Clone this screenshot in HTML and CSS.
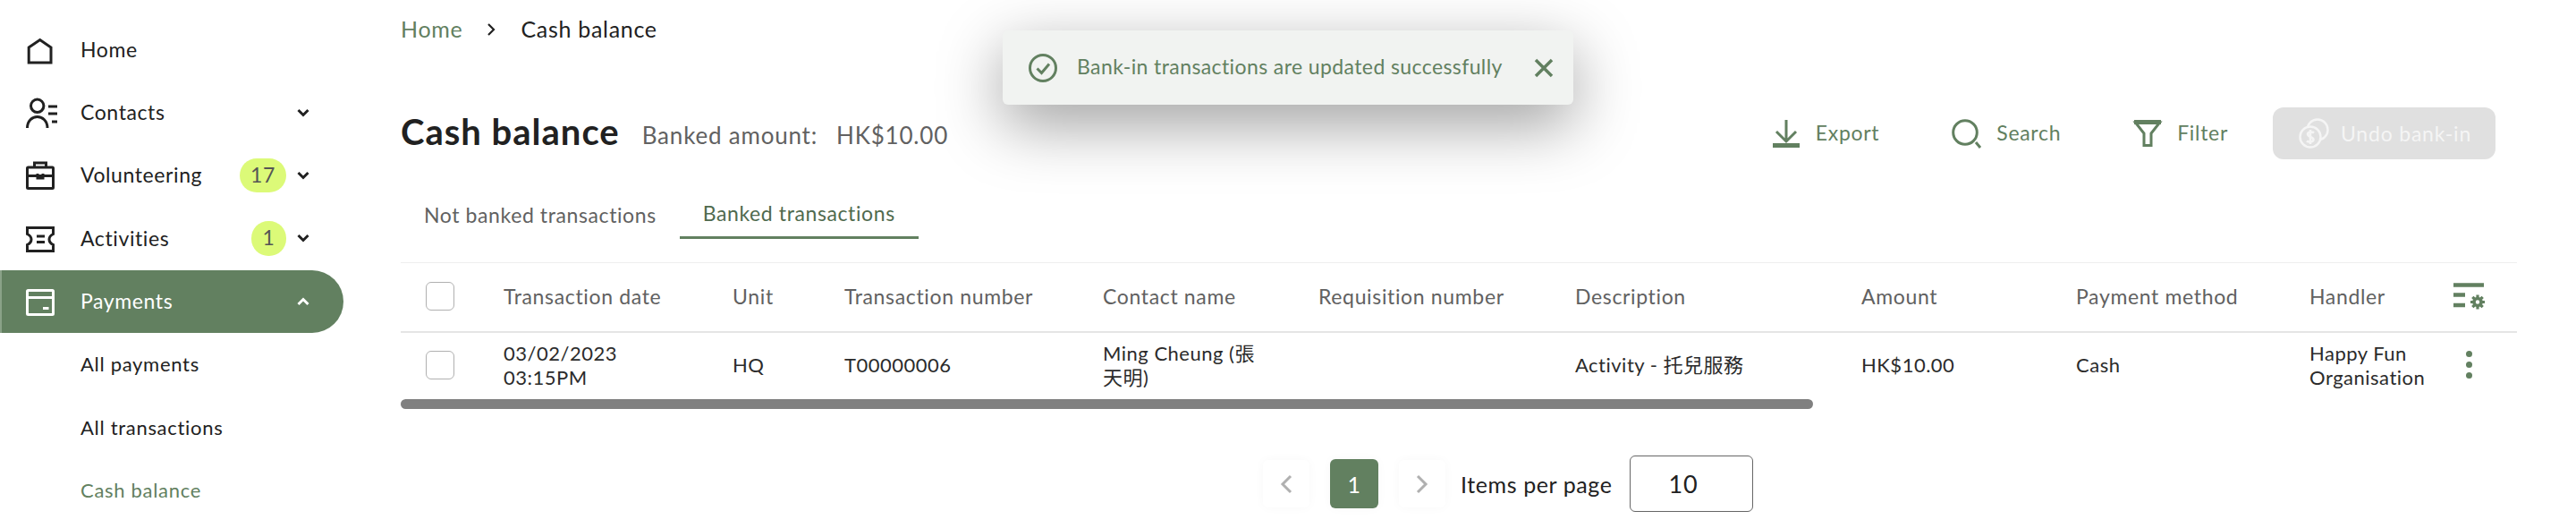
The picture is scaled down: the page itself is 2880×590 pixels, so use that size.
FILE: index.html
```html
<!DOCTYPE html>
<html lang="en">
<head>
    <meta charset="UTF-8">
    <title>Cash balance</title>
    <link rel="stylesheet" href="styles.css">
</head>

<body>
    <div class="app">
        <!-- side menu -->
        <nav class="sidebar">
            <a class="nav-item">
                <svg class="nav-icon" viewBox="0 0 32 32"><path d="M3.2 14L15.7 5.5 28 14V31H3.2Z"/></svg>
                <span class="nav-label">Home</span>
            </a>
            <a class="nav-item">
                <svg class="nav-icon" viewBox="0 0 32 32"><circle cx="12.7" cy="8.3" r="7.2"/><path d="M1.5 33C1.5 25 7 20.5 12.7 20.5S24 25 24 33M25 9H35M25 17H35M29 26H35"/></svg>
                <span class="nav-label">Contacts</span>
                <svg class="chevron" viewBox="0 0 14 10"><path d="M1.5 2L7 7.5 12.5 2"/></svg>
            </a>
            <a class="nav-item">
                <svg class="nav-icon" viewBox="0 0 32 32"><rect x="1.5" y="7" width="29" height="23.5" rx="1"/><path d="M9.5 7V2H22.5V7M1.5 16.5H30.5M13 14V19H19V14"/></svg>
                <span class="nav-label">Volunteering</span>
                <span class="badge">17</span>
                <svg class="chevron" viewBox="0 0 14 10"><path d="M1.5 2L7 7.5 12.5 2"/></svg>
            </a>
            <a class="nav-item">
                <svg class="nav-icon" viewBox="0 0 32 32"><path d="M1.5 4.5H30.5V11.5C27.5 13 26 15 26 17.5S27.5 22 30.5 23.5V30.5H1.5V23.5C4.5 22 6 20 6 17.5S4.5 13 1.5 11.5ZM12 14H21M12 20.5H21"/></svg>
                <span class="nav-label">Activities</span>
                <span class="badge badge-round">1</span>
                <svg class="chevron" viewBox="0 0 14 10"><path d="M1.5 2L7 7.5 12.5 2"/></svg>
            </a>
            <a class="nav-item nav-active">
                <svg class="nav-icon" viewBox="0 0 32 32"><rect x="1.5" y="3.5" width="29" height="27" rx="1"/><path d="M1.5 11.5H30.5M19 23.5H25.5"/></svg>
                <span class="nav-label">Payments</span>
                <svg class="chevron" viewBox="0 0 14 10"><path d="M1.5 8L7 2.5 12.5 8"/></svg>
            </a>
            <a class="nav-item"><span class="nav-label nav-sub">All payments</span></a>
            <a class="nav-item"><span class="nav-label nav-sub">All transactions</span></a>
            <a class="nav-item"><span class="nav-label nav-sub nav-current">Cash balance</span></a>
        </nav>

        <main class="content">
            <div class="breadcrumb">
                <a class="crumb-link">Home</a>
                <svg class="crumb-sep" viewBox="0 0 10 16"><path d="M2 2L8 8 2 14"/></svg>
                <span>Cash balance</span>
            </div>

            <div class="page-head">
                <h1>Cash balance</h1>
                <span class="banked">Banked amount:</span>
                <span class="banked banked-value">HK$10.00</span>
                <div class="toolbar">
                    <a class="tool tool-export">
                        <svg class="tool-icon" viewBox="0 0 30 32"><path d="M15 1V24M4 14L15 25 26 14"/><path class="thick" d="M0 29.5H30"/></svg>
                        <span>Export</span>
                    </a>
                    <a class="tool tool-search">
                        <svg class="tool-icon" viewBox="0 0 32 32"><circle cx="15" cy="15" r="13.3"/><path d="M27 26L32 32"/></svg>
                        <span>Search</span>
                    </a>
                    <a class="tool tool-filter">
                        <svg class="tool-icon" viewBox="0 0 30 30"><path d="M1.5 3H28.5L19 15V28.5H11V15Z"/><path class="thick" d="M0 2.5H30"/></svg>
                        <span>Filter</span>
                    </a>
                    <button class="undo-btn">
                        <svg class="undo-icon" viewBox="0 0 34 34"><circle cx="21" cy="13" r="11.5"/><circle cx="13" cy="21" r="11.5" class="coin-front"/><path d="M17 16.5C15.5 15 10 15 10 18S16.5 21 16.5 24 10.5 27 9 25.5M13 13V29"/></svg>
                        <span>Undo bank-in</span>
                    </button>
                </div>
            </div>

            <div class="tabs">
                <a class="tab">Not banked transactions</a>
                <a class="tab tab-active">Banked transactions</a>
            </div>

            <div class="table-wrap">
                <table>
                    <colgroup>
                        <col class="col-check"><col class="col-date"><col class="col-unit"><col class="col-txn">
                        <col class="col-contact"><col class="col-req"><col class="col-desc"><col class="col-amount">
                        <col class="col-method"><col class="col-handler"><col class="col-action">
                    </colgroup>
                    <thead>
                        <tr>
                            <th><span class="checkbox"></span></th>
                            <th>Transaction date</th>
                            <th>Unit</th>
                            <th>Transaction number</th>
                            <th>Contact name</th>
                            <th>Requisition number</th>
                            <th>Description</th>
                            <th>Amount</th>
                            <th>Payment method</th>
                            <th>Handler</th>
                            <th>
                                <svg class="col-settings" viewBox="0 0 35 29"><path d="M0 2.5H34M0 13.5H13M0 25H13"/><circle cx="27" cy="21.5" r="4"/><path class="gear" d="M27 13.5V16.5M27 26.5V29.5M19 21.5H22M32 21.5H35M21.3 15.8L23.5 18M30.5 25L32.7 27.2M21.3 27.2L23.5 25M30.5 18L32.7 15.8"/></svg>
                            </th>
                        </tr>
                    </thead>
                    <tbody>
                        <tr>
                            <td><span class="checkbox"></span></td>
                            <td>03/02/2023<br>03:15PM</td>
                            <td>HQ</td>
                            <td>T00000006</td>
                            <td class="cell-contact">Ming Cheung (張天明)</td>
                            <td></td>
                            <td>Activity - 托兒服務</td>
                            <td>HK$10.00</td>
                            <td>Cash</td>
                            <td>Happy Fun Organisation</td>
                            <td><span class="kebab"><i></i><i></i><i></i></span></td>
                        </tr>
                    </tbody>
                </table>
                <div class="scrollbar"></div>
            </div>

            <div class="pagination">
                <span class="page-btn"><svg class="page-arrow" viewBox="0 0 14 22"><path d="M12 2L3 11 12 20"/></svg></span>
                <span class="page-btn page-current">1</span>
                <span class="page-btn"><svg class="page-arrow" viewBox="0 0 14 22"><path d="M2 2L11 11 2 20"/></svg></span>
                <span class="per-page">Items per page</span>
                <span class="per-select">10</span>
            </div>
        </main>
    </div>

    <!-- toast over the page -->
    <div class="toast">
        <svg class="toast-icon" viewBox="0 0 32 32"><circle cx="16" cy="16" r="14.5"/><path d="M9.5 16.5L14.5 21.5 23 11.5"/></svg>
        <span class="toast-text">Bank-in transactions are updated successfully</span>
        <svg class="toast-close" viewBox="0 0 22 22"><path d="M2 2L20 20M20 2L2 20"/></svg>
    </div>
</body>
</html>
```

FILE: styles.css
```css
/* page */
html, body {
    margin: 0;
    padding: 0;
    background: #fff;
}
body {
    height: 590px;
    overflow: hidden;
    font-family: "Lato", "Noto Sans CJK TC", sans-serif;
    font-size: 23px;
    letter-spacing: 0.7px;
    color: #212121;
}
.app {
    display: flex;
    height: 590px;
}

/* side menu */
.sidebar {
    width: 384px;
    flex: none;
    padding-top: 20px;
    box-sizing: border-box;
}
.nav-item {
    display: flex;
    align-items: center;
    height: 70.4px;
    padding: 0 38px 0 29px;
    box-sizing: border-box;
}
.nav-icon {
    width: 32px;
    height: 32px;
    flex: none;
    overflow: visible;
    fill: none;
    stroke: #212121;
    stroke-width: 3;
    margin-right: 29px;
}
.nav-label {
    flex: 1;
    padding-bottom: 1px;
    letter-spacing: 0.6px;
}
.nav-sub {
    padding-left: 61px;
    font-size: 22px;
    letter-spacing: 0.7px;
}
.nav-current {
    color: #628060;
}
.nav-active {
    background: #628060;
    color: #fff;
    border-radius: 0 35px 35px 0;
    border-left: 2px solid #8aa288;
    padding-left: 27px;
}
.nav-active .nav-icon,
.nav-active .chevron {
    stroke: #fff;
}
.chevron {
    width: 14px;
    height: 10px;
    flex: none;
    fill: none;
    stroke: #212121;
    stroke-width: 3;
}
.badge {
    background: #dcfa78;
    color: #555;
    height: 38px;
    line-height: 36px;
    border-radius: 19px;
    padding: 0 8px;
    width: 36px;
    text-align: center;
    margin-right: 12px;
}
.badge-round {
    width: 39px;
    height: 39px;
    padding: 0;
    line-height: 37px;
}

/* main area */
.content {
    flex: 1;
    min-width: 0;
    padding: 17px 66px 0 64px;
}
.breadcrumb {
    display: flex;
    align-items: center;
    height: 30px;
    font-size: 25px;
}
.crumb-link {
    color: #628060;
}
.crumb-sep {
    width: 10px;
    height: 16px;
    margin: 2px 28px 0 27px;
    fill: none;
    stroke: #212121;
    stroke-width: 2.2;
}

.page-head {
    display: flex;
    align-items: center;
    height: 58px;
    margin-top: 73px;
}
h1 {
    margin: 0 25px 4px 0;
    font-size: 40px;
    letter-spacing: 1px;
    font-weight: 700;
    line-height: 54px;
}
.banked {
    color: #616161;
    font-size: 26px;
    letter-spacing: 0.8px;
    padding-top: 3px;
}
.banked-value {
    margin-left: 21px;
}
.toolbar {
    display: flex;
    align-items: center;
    margin-left: auto;
    margin-right: 24px;
}
.tool {
    display: flex;
    align-items: center;
    color: #628060;
}
.tool span {
    padding-bottom: 2px;
}
.tool-icon {
    overflow: visible;
    fill: none;
    stroke: #628060;
    stroke-width: 3;
    margin-right: 18px;
}
.tool-icon .thick {
    stroke-width: 5;
}
.tool-export .tool-icon {
    width: 30px;
    height: 32px;
}
.tool-search .tool-icon {
    width: 32px;
    height: 32px;
}
.tool-filter .tool-icon {
    width: 30px;
    height: 30px;
}
.tool-export {
    margin-right: 81px;
}
.tool-search {
    margin-right: 82px;
}
.undo-btn {
    display: flex;
    align-items: center;
    width: 249px;
    height: 58px;
    margin-left: 50px;
    padding: 0 0 0 29px;
    border: none;
    border-radius: 12px;
    background: #e0e0e0;
    color: #f5f5f5;
    font: inherit;
    letter-spacing: 0.8px;
}
.undo-icon {
    width: 34px;
    height: 34px;
    margin-right: 13px;
    fill: none;
    stroke: #f5f5f5;
    stroke-width: 2.5;
}
.coin-front {
    fill: #e0e0e0;
}

/* tabs */
.tabs {
    display: flex;
    height: 55px;
    margin-top: 34px;
}
.tab {
    display: flex;
    align-items: center;
    justify-content: center;
    box-sizing: border-box;
    height: 55px;
    padding: 0 26px;
    color: #616161;
    letter-spacing: 0.6px;
}
.tab-active {
    color: #4f6a4e;
    border-bottom: 3px solid #628060;
}

/* table */
.table-wrap {
    margin-top: 26px;
    border-top: 1px solid #eeeeee;
}
table {
    width: 100%;
    table-layout: fixed;
    border-collapse: collapse;
}
.col-check { width: 115px; }
.col-date { width: 256px; }
.col-unit { width: 125px; }
.col-txn { width: 289px; }
.col-contact { width: 241px; }
.col-req { width: 287px; }
.col-desc { width: 320px; }
.col-amount { width: 240px; }
.col-method { width: 261px; }
.col-handler { width: 161px; }
th, td {
    box-sizing: border-box;
    padding: 0;
}
th {
    height: 77px;
    padding-bottom: 3px;
    text-align: left;
    font-weight: 400;
    color: #616161;
    border-bottom: 2px solid #e5e5e5;
    letter-spacing: 0.65px;
}
td {
    height: 75px;
    padding-bottom: 3px;
    font-size: 22px;
    letter-spacing: 0.5px;
    line-height: 27px;
    color: #2b2b2b;
}
th:first-child, td:first-child {
    padding-left: 28px;
}
.checkbox {
    display: block;
    width: 32px;
    height: 32px;
    box-sizing: border-box;
    border: 1.5px solid #b0b0b0;
    border-radius: 6px;
}
.cell-contact {
    padding-right: 50px;
}
.col-settings {
    display: block;
    width: 35px;
    height: 29px;
    overflow: visible;
    fill: none;
    stroke: #628060;
    stroke-width: 4.5;
}
.col-settings circle {
    stroke-width: 3.6;
}
.col-settings .gear {
    stroke-width: 3.2;
}
.kebab {
    display: flex;
    flex-direction: column;
    gap: 5px;
    width: 7px;
    margin-left: 14px;
}
.kebab i {
    width: 7px;
    height: 7px;
    border-radius: 50%;
    background: #628060;
}
.scrollbar {
    width: 1579px;
    height: 11px;
    border-radius: 6px;
    background: #808080;
}

/* pagination */
.pagination {
    display: flex;
    align-items: center;
    height: 63px;
    margin: 52px 0 0 964px;
}
.page-btn {
    display: flex;
    align-items: center;
    justify-content: center;
    width: 52px;
    height: 53px;
    margin-right: 23px;
    border-radius: 6px;
    box-shadow: 0 0 12px rgba(0, 0, 0, 0.03);
}
.page-current {
    width: 54px;
    height: 55px;
    background: #628060;
    color: #fff;
    font-size: 25px;
}
.page-arrow {
    width: 14px;
    height: 22px;
    fill: none;
    stroke: #b0b0b0;
    stroke-width: 3;
}
.per-page {
    margin-left: -6px;
    font-size: 25px;
    letter-spacing: 0.6px;
}
.per-select {
    box-sizing: border-box;
    width: 138px;
    height: 63px;
    line-height: 61px;
    margin-left: 19px;
    padding-left: 43px;
    border: 1px solid #666;
    border-radius: 6px;
    font-size: 27px;
}

/* toast */
.toast {
    position: absolute;
    top: 34px;
    left: 1121px;
    width: 638px;
    height: 83px;
    display: flex;
    align-items: center;
    box-sizing: border-box;
    padding-left: 29px;
    border-radius: 6px;
    background: #f1f3f1;
    color: #628060;
    letter-spacing: 0.4px;
    box-shadow: 0 22px 70px rgba(0, 0, 0, 0.38);
}
.toast-icon {
    width: 32px;
    height: 32px;
    fill: none;
    stroke: #628060;
    stroke-width: 3;
}
.toast-text {
    margin-left: 22px;
    padding-bottom: 3px;
    width: 477px;
    white-space: nowrap;
}
.toast-close {
    width: 22px;
    height: 22px;
    margin-left: 34px;
    fill: none;
    stroke: #628060;
    stroke-width: 3.5;
}
```
